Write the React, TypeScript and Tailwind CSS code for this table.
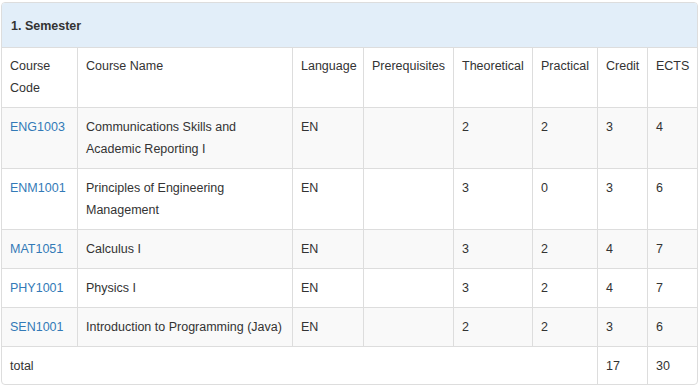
const courses = [
  { code: "ENG1003", name: "Communications Skills and Academic Reporting I", lang: "EN", t: 2, p: 2, credit: 3, ects: 4 },
  { code: "ENM1001", name: "Principles of Engineering Management", lang: "EN", t: 3, p: 0, credit: 3, ects: 6 },
  { code: "MAT1051", name: "Calculus I", lang: "EN", t: 3, p: 2, credit: 4, ects: 7 },
  { code: "PHY1001", name: "Physics I", lang: "EN", t: 3, p: 2, credit: 4, ects: 7 },
  { code: "SEN1001", name: "Introduction to Programming (Java)", lang: "EN", t: 2, p: 2, credit: 3, ects: 6 },
];

const cell = "border border-[#ddd] px-2 py-[8px] align-top";

export default function App() {
  return (
    <div className="bg-white pl-[1px] pr-[2px] pt-[2px] font-['Liberation_Sans',Arial,sans-serif] text-[12.5px] leading-[22px] text-[#333]">
      <div className="border border-[#ddd] rounded-[4px] overflow-hidden">
        <div className="bg-[#e2eef9] px-[9px] h-[45px] pt-px flex items-center font-bold border-b border-[#ddd]">
          1. Semester
        </div>
        <table className="border-collapse table-fixed -m-px" style={{ width: "calc(100% + 2px)" }}>
          <colgroup>
            <col className="w-[76px]" />
            <col className="w-[215px]" />
            <col className="w-[71px]" />
            <col className="w-[90px]" />
            <col className="w-[79px]" />
            <col className="w-[65px]" />
            <col className="w-[50px]" />
            <col />
          </colgroup>
          <thead>
            <tr>
              <th className={`${cell} border-t-0 text-left font-normal`}>Course Code</th>
              <th className={`${cell} border-t-0 text-left font-normal`}>Course Name</th>
              <th className={`${cell} border-t-0 text-left font-normal`}>Language</th>
              <th className={`${cell} border-t-0 text-left font-normal`}>Prerequisites</th>
              <th className={`${cell} border-t-0 text-left font-normal`}>Theoretical</th>
              <th className={`${cell} border-t-0 text-left font-normal`}>Practical</th>
              <th className={`${cell} border-t-0 text-left font-normal`}>Credit</th>
              <th className={`${cell} border-t-0 text-left font-normal`}>ECTS</th>
            </tr>
          </thead>
          <tbody>
            {courses.map((c, i) => (
              <tr key={c.code} className={i % 2 === 0 ? "bg-[#f9f9f9]" : "bg-white"}>
                <td className={cell}>
                  <a href="#" className="text-[#337ab7]">{c.code}</a>
                </td>
                <td className={cell}>{c.name}</td>
                <td className={cell}>{c.lang}</td>
                <td className={cell}></td>
                <td className={cell}>{c.t}</td>
                <td className={cell}>{c.p}</td>
                <td className={cell}>{c.credit}</td>
                <td className={cell}>{c.ects}</td>
              </tr>
            ))}
            <tr>
              <td className={`${cell} border-b-0`} colSpan={6}>total</td>
              <td className={`${cell} border-b-0`}>17</td>
              <td className={`${cell} border-b-0`}>30</td>
            </tr>
          </tbody>
        </table>
      </div>
    </div>
  );
}
